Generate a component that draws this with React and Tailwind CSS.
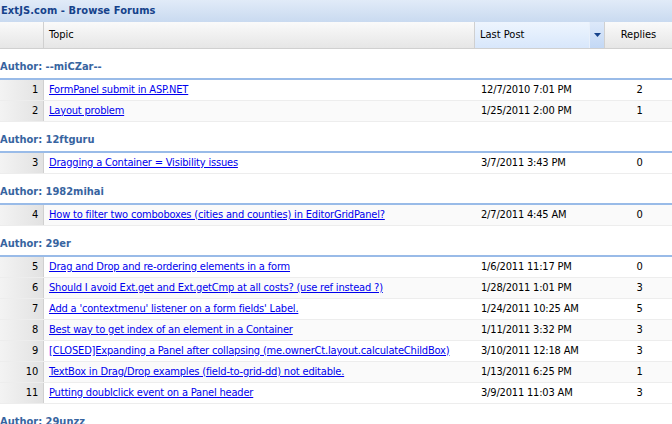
import React from "react";

const groups = [
  {
    author: "--miCZar--",
    rows: [
      [1, "FormPanel submit in ASP.NET", "12/7/2010 7:01 PM", 2],
      [2, "Layout problem", "1/25/2011 2:00 PM", 1],
    ],
  },
  {
    author: "12ftguru",
    rows: [[3, "Dragging a Container = Visibility issues", "3/7/2011 3:43 PM", 0]],
  },
  {
    author: "1982mihai",
    rows: [
      [4, "How to filter two comboboxes (cities and counties) in EditorGridPanel?", "2/7/2011 4:45 AM", 0],
    ],
  },
  {
    author: "29er",
    rows: [
      [5, "Drag and Drop and re-ordering elements in a form", "1/6/2011 11:17 PM", 0],
      [6, "Should I avoid Ext.get and Ext.getCmp at all costs? (use ref instead ?)", "1/28/2011 1:01 PM", 3],
      [7, "Add a 'contextmenu' listener on a form fields' Label.", "1/24/2011 10:25 AM", 5],
      [8, "Best way to get index of an element in a Container", "1/11/2011 3:32 PM", 3],
      [9, "[CLOSED]Expanding a Panel after collapsing (me.ownerCt.layout.calculateChildBox)", "3/10/2011 12:18 AM", 3],
      [10, "TextBox in Drag/Drop examples (field-to-grid-dd) not editable.", "1/13/2011 6:25 PM", 1],
      [11, "Putting doublclick event on a Panel header", "3/9/2011 11:03 AM", 3],
    ],
  },
  { author: "29unzz", rows: [] },
];

const cols = "grid grid-cols-[44px_431px_130px_67px]";

export default function App() {
  return (
    <div
      className="w-[672px] h-[424px] overflow-hidden bg-white text-[11px] text-black"
      style={{ fontFamily: '"DejaVu Sans Condensed", "DejaVu Sans", sans-serif' }}
    >
      <div className="h-[22px] bg-gradient-to-b from-[#e1ebf8] to-[#c9daf0] flex items-center pl-[1px] pb-[1px]">
        <span className="font-bold text-[11px] tracking-[0.1px] text-[#15428b] leading-none">ExtJS.com - Browse Forums</span>
      </div>
      <div className={`${cols} h-[27px] border-b border-[#d0d0d0] bg-gradient-to-b from-[#fafafa] to-[#e6e6e6]`}>
        <div className="border-r border-[#d0d0d0]" />
        <div className="border-r border-[#d0d0d0] flex items-center pl-[5px]">Topic</div>
        <div className="border-r border-[#d0d0d0] flex bg-gradient-to-b from-[#eef5fe] to-[#d8e7fb]">
          <div className="flex-1 flex items-center pl-[5px]">Last Post</div>
          <div className="w-[15px] flex items-center justify-center bg-gradient-to-b from-[#dde9fa] to-[#c3d8f5] border-l border-[#e8f0fb]">
            <svg width="7" height="4" viewBox="0 0 7 4">
              <path d="M0 0h7L3.5 4z" fill="#15428b" />
            </svg>
          </div>
        </div>
        <div className="flex items-center justify-center">Replies</div>
      </div>
      {groups.map((g) => (
        <div key={g.author}>
          <div className="pt-[11px] pb-[4px] border-b-2 border-[#99bbe8] leading-[14px] font-bold text-[#3764a0]">
            Author: {g.author}
          </div>
          {g.rows.map(([n, topic, date, rep]) => (
            <div
              key={n}
              className={`${cols} h-[21px] border-b border-[#ededed] tracking-[-0.18px] ${n % 2 === 0 ? "bg-[#fafafa]" : "bg-white"}`}
            >
              <div className="border-r border-[#d0d0d0] bg-gradient-to-r from-[#f3f3f3] to-[#e2e2e2] flex items-center justify-end pr-[5px]">
                {n}
              </div>
              <div className="flex items-center pl-[5px] whitespace-nowrap">
                <a href="#" className="text-[#0000ee] underline">{topic}</a>
              </div>
              <div className="flex items-center pl-[6px] whitespace-nowrap">{date}</div>
              <div className="flex items-center justify-center pl-[2px]">{rep}</div>
            </div>
          ))}
        </div>
      ))}
    </div>
  );
}
